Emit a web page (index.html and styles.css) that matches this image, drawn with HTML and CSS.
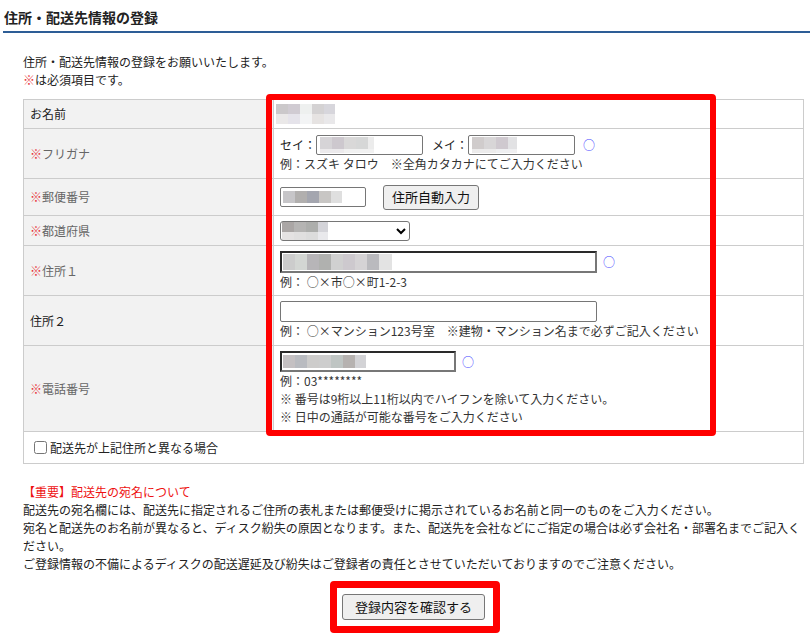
FILE: index.html
```html
<!DOCTYPE html>
<html lang="ja">
<head>
<meta charset="utf-8">
<title>住所・配送先情報の登録</title>
<link rel="stylesheet" href="styles.css">
</head>
<body>
<div class="page">
  <h1 class="title">住所・配送先情報の登録</h1>
  <div class="content">
    <p class="intro">住所・配送先情報の登録をお願いいたします。<br><span class="req">※</span>は必須項目です。</p>
    <table class="form">
      <colgroup><col class="c-label"><col></colgroup>
      <tr class="r-name">
        <th>お名前</th>
        <td><div class="mosaic m-name"></div></td>
      </tr>
      <tr class="r-kana">
        <th class="need"><span class="req">※</span>フリガナ</th>
        <td>
          <div class="field-line">
            <span>セイ：</span><input class="inp w-kana m-sei" type="text">
            <span class="gap">メイ：</span><input class="inp w-kana m-mei" type="text">
            <span class="ok ok-wide">○</span>
          </div>
          <div class="hint">例：スズキ タロウ　※全角カタカナにてご入力ください</div>
        </td>
      </tr>
      <tr class="r-zip">
        <th class="need"><span class="req">※</span>郵便番号</th>
        <td>
          <div class="field-line">
            <input class="inp w-zip m-zip" type="text">
            <button class="btn btn-auto" type="button">住所自動入力</button>
          </div>
        </td>
      </tr>
      <tr class="r-pref">
        <th class="need"><span class="req">※</span>都道府県</th>
        <td>
          <select class="sel m-pref"><option> </option></select>
        </td>
      </tr>
      <tr class="r-addr1">
        <th class="need"><span class="req">※</span>住所１</th>
        <td>
          <div class="field-line">
            <input class="inp inp-dark w-addr m-addr1" type="text"><span class="ok">○</span>
          </div>
          <div class="hint">例： ○×市○×町1-2-3</div>
        </td>
      </tr>
      <tr class="r-addr2">
        <th>住所２</th>
        <td>
          <div class="field-line">
            <input class="inp w-addr" type="text">
          </div>
          <div class="hint">例： ○×マンション123号室　※建物・マンション名まで必ずご記入ください</div>
        </td>
      </tr>
      <tr class="r-tel">
        <th class="need"><span class="req">※</span>電話番号</th>
        <td>
          <div class="field-line">
            <input class="inp inp-dark w-tel m-tel" type="text"><span class="ok">○</span>
          </div>
          <div class="hint">例：03********</div>
          <div class="hint">※ 番号は9桁以上11桁以内でハイフンを除いて入力ください。</div>
          <div class="hint">※ 日中の通話が可能な番号をご入力ください</div>
        </td>
      </tr>
      <tr class="r-check">
        <td colspan="2" class="check-cell">
          <label class="check"><input type="checkbox">配送先が上記住所と異なる場合</label>
        </td>
      </tr>
    </table>

    <div class="notice">
      <p class="notice-title">【重要】配送先の宛名について</p>
      <p>配送先の宛名欄には、配送先に指定されるご住所の表札または郵便受けに掲示されているお名前と同一のものをご入力ください。<br>宛名と配送先のお名前が異なると、ディスク紛失の原因となります。また、配送先を会社などにご指定の場合は必ず会社名・部署名までご記入ください。<br>ご登録情報の不備によるディスクの配送遅延及び紛失はご登録者の責任とさせていただいておりますのでご注意ください。</p>
    </div>

    <div class="actions">
      <button class="btn btn-submit" type="button">登録内容を確認する</button>
    </div>
  </div>

  <div class="highlight hl-form"></div>
  <div class="highlight hl-button"></div>
</div>
</body>
</html>
```

FILE: styles.css
```css
* { box-sizing: border-box; }

body {
  margin: 0;
  font-family: "Noto Sans CJK JP", "Noto Sans", sans-serif;
  font-size: 12px;
  line-height: 18px;
  color: #222;
  background: #fff;
}

.page {
  position: relative;
  width: 810px;
  min-height: 640px;
}

.title {
  margin: 0 0 0 3px;
  padding: 7px 1px 4px;
  font-size: 14px;
  line-height: 20px;
  font-weight: bold;
  color: #222;
  border-bottom: 2px solid #2d5d96;
}

.content {
  padding: 20px 6px 0 23px;
}

.intro {
  margin: 0 0 10px;
  color: #222;
}

.req { color: #e8383d; }

table.form {
  width: 100%;
  border-collapse: collapse;
  table-layout: fixed;
}

.c-label { width: 250px; }

.form th,
.form td {
  border: 1px solid #cccccc;
}

.form th {
  background: #f2f2f2;
  text-align: left;
  font-weight: normal;
  padding: 0 6px;
  vertical-align: middle;
  color: #222;
}

.form th.need { color: #666; }

.form td {
  padding: 0 6px;
  vertical-align: middle;
  background: #fff;
}

.r-name { height: 29px; }
.r-kana { height: 50px; }
.r-zip { height: 37px; }
.r-pref { height: 30px; }
.r-addr1 { height: 50px; }
.r-addr2 { height: 50px; }
.r-tel { height: 86px; }
.r-check { height: 32px; }

.field-line {
  display: flex;
  align-items: center;
  min-height: 20px;
  color: #222;
}

.gap { margin-left: 9px; }

.hint {
  color: #333;
  line-height: 18px;
}

.inp {
  height: 20px;
  border: 1px solid #767676;
  border-radius: 2px;
  background-color: #fff;
  padding: 0 3px;
  font: inherit;
  margin: 0;
}

.inp-dark {
  height: 22px;
  border-width: 2px;
  border-color: #2a2a2a #777 #777 #2a2a2a;
  border-radius: 0;
}

.w-kana { width: 107px; }
.w-zip { width: 86px; }
.w-addr { width: 317px; height: 21px; }
.w-addr.inp-dark { height: 22px; }
.w-tel { width: 176px; height: 21px; }

.ok {
  color: #4646ff;
  margin-left: 6px;
  font-size: 12px;
}
.ok-wide { margin-left: 8px; }

.btn {
  font-family: "Noto Sans CJK JP", sans-serif;
  font-size: 13px;
  line-height: 18px;
  color: #111;
  background: #efefef;
  border: 1px solid #767676;
  border-radius: 3px;
  margin: 0;
}

.btn-auto {
  height: 25px;
  padding: 0 8px;
  margin-left: 17px;
}

.sel {
  width: 130px;
  height: 20px;
  font: inherit;
  font-size: 12px;
  border: 1px solid #767676;
  border-radius: 3px;
  margin: 0;
  display: block;
}

.check-cell { padding-left: 6px; }

.check {
  display: flex;
  align-items: center;
  color: #222;
}

.check input {
  width: 13px;
  height: 13px;
  margin: 0 3px 0 4px;
}

.notice {
  margin-top: 19px;
}

.notice p {
  margin: 0;
  color: #222;
}

.notice .notice-title {
  color: #ee1111;
}

.actions {
  margin-top: 21px;
  text-align: center;
}

.btn-submit {
  height: 26px;
  padding: 0 12px;
}

/* blurred (mosaic) personal data */
.mosaic { margin-left: -4px; }

.m-name {
  width: 59px;
  height: 20px;
  background:
    linear-gradient(90deg, #cbc8ca 0 12px, #d0cbd2 12px 24px, #eef0ef 24px 36px, #d4d2d3 36px 48px, #d7d6dc 48px) top / 100% 50% no-repeat,
    linear-gradient(90deg, #eae8e8 0 12px, #e5e3ea 12px 24px, #f3f4f5 24px 36px, #e6e3e2 36px 48px, #e9e8ea 48px) bottom / 100% 50% no-repeat;
}

.m-sei {
  background:
    linear-gradient(90deg, #d6d4d7 0 12px, #cdc8ce 12px 24px, #d9d8d8 24px 36px, #d6d7d7 36px 48px, #ececec 48px) 3px 1px / 54px 12px no-repeat,
    linear-gradient(90deg, #eceaec 0 24px, #f1f1f1 24px) 3px 13px / 54px 4px no-repeat,
    #fff;
}

.m-mei {
  background:
    linear-gradient(90deg, #d0cccc 0 12px, #d8d6d7 12px 24px, #cfc9cf 24px 36px, #e2e2e4 36px) 3px 1px / 45px 12px no-repeat,
    linear-gradient(90deg, #ecebeb 0 24px, #efeff1 24px) 3px 13px / 45px 4px no-repeat,
    #fff;
}

.m-zip {
  background:
    linear-gradient(90deg, #c6c5c8 0 12px, #b1afae 12px 24px, #a4a6af 24px 36px, #c8c6c4 36px 48px, #dfdfdf 48px) 2px 3px / 59px 12px no-repeat,
    #fff;
}

.m-pref {
  background:
    linear-gradient(90deg, #aaa6a5 0 12px, #b5b4b3 12px 24px, #adaeac 24px 36px, #d4d4d9 36px) 1px 0 / 46px 10px no-repeat,
    linear-gradient(90deg, #e4e2e2 0 12px, #e0dfdf 12px 24px, #dcdcdc 24px 36px, #e9e9ec 36px) 1px 10px / 46px 9px no-repeat,
    #fff;
}

.m-addr1 {
  background:
    linear-gradient(90deg, #cccccc 0 12px, #d3d6d3 12px 24px, #b7b5b8 24px 36px, #b0b1af 36px 48px, #d0d0d0 48px 60px, #cdc9ce 60px 72px, #d5d3d5 72px 84px, #bababe 84px 96px, #e3e3e3 96px) 1px 1px / 109px 16px no-repeat,
    #fff;
}

.m-tel {
  background:
    linear-gradient(90deg, #c4c0c2 0 12px, #b9bbc0 12px 24px, #cdcccb 24px 36px, #cdcdcd 36px 48px, #bfc5c3 48px 60px, #b6b2b0 60px 72px, #d3d3d6 72px) 1px 2px / 83px 13px no-repeat,
    #fff;
}

/* red review highlights drawn over the page */
.highlight {
  position: absolute;
  border-style: solid;
  border-color: #ff0000;
  border-radius: 4px;
  pointer-events: none;
}

.hl-form {
  left: 266px;
  top: 94px;
  width: 450px;
  height: 342px;
  border-width: 6px;
}

.hl-button {
  left: 330px;
  top: 581px;
  width: 170px;
  height: 52px;
  border-width: 7px;
}
```
